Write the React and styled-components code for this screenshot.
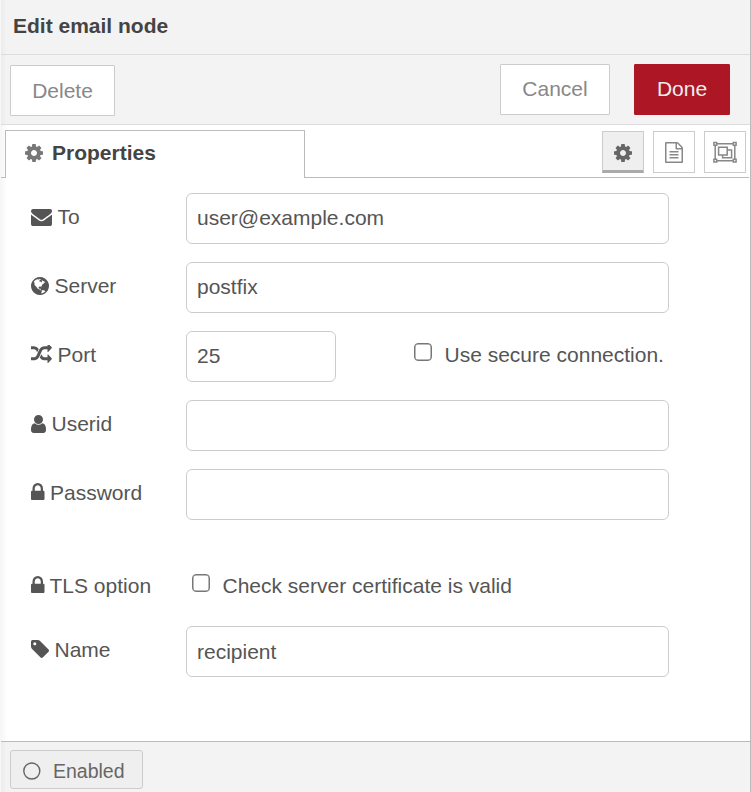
import React from "react";
import styled, { createGlobalStyle, css } from "styled-components";

const GlobalStyle = createGlobalStyle`
  *, *::before, *::after { box-sizing: border-box; }
  body {
    margin: 0;
    background: #fff;
    color: #555;
    font-family: "Liberation Sans", Arial, sans-serif;
    font-size: 21px;
    line-height: 30px;
    overflow: hidden;
  }
`;

const Tray = styled.div`
  display: flex;
  flex-direction: column;
  width: 751px;
  height: 792px;
  border-left: 1px solid #f7f7f7;
  border-right: 1px solid #bbb;
  background: linear-gradient(to right, #f6f6f6, #fff 6px);
`;

const Header = styled.header`
  height: 55px;
  padding: 11px 12px 0;
  background: linear-gradient(to right, #ececec, #f3f3f3 6px);
  border-bottom: 1px solid #ddd;
  color: #444;
  font-weight: bold;
`;

const Toolbar = styled.div`
  display: flex;
  align-items: flex-start;
  gap: 24px;
  height: 70px;
  padding: 9px 20px 0 9px;
  background: linear-gradient(to right, #ececec, #f3f3f3 6px);
  border-bottom: 1px solid #ddd;
`;

const Button = styled.button`
  width: ${(p) => p.$width}px;
  height: 51px;
  padding: 0 0 2px;
  border: 1px solid ${(p) => (p.$primary ? "#ad1625" : "#ccc")};
  border-radius: 1px;
  background: ${(p) => (p.$primary ? "#ad1625" : "#fff")};
  color: ${(p) => (p.$primary ? "#eee" : "#888")};
  font: inherit;
  ${(p) =>
    p.$first &&
    css`
      margin: 1px auto 0 0;
      padding: 0;
    `}
`;

const TabBar = styled.div`
  display: flex;
  height: 53px;
  padding-top: 5px;
`;

const TabEdge = styled.div`
  width: ${(p) => p.$width}px;
  border-bottom: 1px solid #bbb;
`;

const Tab = styled.div`
  display: flex;
  width: 300px;
  padding: 7px 0 0 19px;
  border: 1px solid #bbb;
  border-bottom: 0;
  background: #fff;
  color: #444;
  font-weight: bold;
  gap: 9px;
`;

const TabButtons = styled.div`
  display: flex;
  flex: 1;
  justify-content: flex-end;
  gap: 9px;
  padding: 1px 3px 0 0;
  border-bottom: 1px solid #bbb;
  margin-right: 1px;
`;

const IconButton = styled.button`
  display: flex;
  align-items: center;
  justify-content: center;
  width: 42px;
  height: 42px;
  padding: 0;
  border: 1px solid #ccc;
  background: #fff;
  color: #888;
  ${(p) =>
    p.$selected &&
    css`
      border-bottom: 3px solid #aaa;
      padding-top: 3px;
      background: #efefef;
      color: #666;
    `}
`;

const Form = styled.form`
  flex: 1;
  padding: 15px 0 0 29px;
`;

const Row = styled.div`
  display: flex;
  align-items: flex-start;
  height: ${(p) => p.$height || 69}px;
`;

const Label = styled.label`
  display: flex;
  width: 156px;
  padding: 9px 0 0 1px;
  gap: ${(p) => p.$gap || 5.5}px;
`;

const Glyph = styled.svg`
  display: block;
  flex: none;
  width: ${(p) => p.$w}px;
  height: ${(p) => p.$h || 21}px;
  margin-top: ${(p) => p.$top || 0}px;
  color: ${(p) => p.$color || "inherit"};
  fill: currentColor;
`;

const Input = styled.input`
  width: ${(p) => p.$width || 483}px;
  height: 51px;
  padding: 0 10px ${(p) => (p.$low ? 0 : 2)}px;
  border: 1px solid #ccc;
  border-radius: 6px;
  background: #fff;
  color: #555;
  font: inherit;
  outline: none;
`;

const Option = styled.label`
  display: flex;
  align-items: flex-start;
  gap: 12.5px;
  padding-top: 9px;
  margin-left: ${(p) => p.$indent}px;
`;

const Checkbox = styled.input.attrs({ type: "checkbox" })`
  appearance: none;
  width: 18px;
  height: 18px;
  margin: 3px 0 0;
  border: 1px solid #767676;
  box-shadow: inset 0 0 0 0.5px #767676;
  border-radius: 4px;
  background: #fff;
`;

const Footer = styled.footer`
  height: 51px;
  padding: 8px 9px 0;
  border-top: 1px solid #bbb;
  background: linear-gradient(to right, #ececec, #f3f3f3 6px);
`;

const Toggle = styled.button`
  display: flex;
  align-items: center;
  gap: 12px;
  width: 133px;
  height: 39px;
  padding: 2px 0 0 12px;
  border: 1px solid #ccc;
  border-radius: 3px;
  background: #efefef;
  color: #666;
  font: inherit;
  font-size: 19.5px;
`;

const PATHS = {
  cog: ["128 128 1536 1536", "M1152 896q0-106-75-181t-181-75-181 75-75 181 75 181 181 75 181-75 75-181zm512-109v222q0 12-8 23t-20 13l-185 28q-19 54-39 91 35 50 107 138 10 12 10 25t-9 23q-27 37-99 108t-94 71q-12 0-26-9l-138-108q-44 23-91 38-16 136-29 186-7 28-36 28h-222q-14 0-24.5-8.5t-11.5-21.5l-28-184q-49-16-90-37l-141 107q-10 9-25 9-14 0-25-11-126-114-165-168-7-10-7-23 0-12 8-23 15-21 51-66.5t54-70.5q-27-50-41-99l-183-27q-13-2-21-12.5t-8-23.5v-222q0-12 8-23t19-13l186-28q14-46 39-92-40-57-107-138-10-12-10-24 0-10 9-23 26-36 98.5-107.5t94.5-71.5q13 0 26 10l138 107q44-23 91-38 16-136 29-186 7-28 36-28h222q14 0 24.5 8.5t11.5 21.5l28 184q49 16 90 37l142-107q9-9 24-9 13 0 25 10 129 119 165 170 7 8 7 22 0 12-8 23-15 21-51 66.5t-54 70.5q26 50 41 98l183 28q13 2 21 12.5t8 23.5z"],
  envelope: ["0 256 1792 1408", "M1792 710v794q0 66-47 113t-113 47h-1472q-66 0-113-47t-47-113v-794q44 49 101 87 362 246 497 345 57 42 92.5 65.5t94.5 48 110 24.5h2q51 0 110-24.5t94.5-48 92.5-65.5q170-123 498-345 57-39 100-87zm0-294q0 79-49 151t-122 123q-376 261-468 325-10 7-42.5 31t-54 38.5-52 32.5-57.5 27-50 9h-2q-23 0-50-9t-57.5-27-52-32.5-54-38.5-42.5-31q-91-64-262-182.5t-205-142.5q-62-42-117-115.5t-55-136.5q0-78 41.5-130t118.5-52h1472q65 0 112.5 47t47.5 113z"],
  globe: ["128 128 1536 1536", "M896 128q209 0 385.5 103t279.5 279.5 103 385.5-103 385.5-279.5 279.5-385.5 103-385.5-103-279.5-279.5-103-385.5 103-385.5 279.5-279.5 385.5-103zm274 521q-2 1-9.5 9.5t-13.5 9.5q2 0 4.5-5t5-11 3.5-7q6-7 22-15 14-6 52-12 34-8 51 11-2-2 9.5-13t14.5-12q3-2 15-4.5t15-7.5l2-22q-12 1-17.5-7t-6.5-21q0 2-6 8 0-7-4.5-8t-11.5 1-9 1q-10-3-15-7.5t-8-16.5-4-15q-2-5-9.5-11t-9.5-10q-1-2-2.5-5.5t-3-6.5-4-5.5-5.5-2.5-7 5-7.5 10-4.5 5q-3-2-6-1.5t-4.5 1-4.5 3-5 3.5q-3 2-8.5 3t-8.5 2q15-5-1-11-10-4-16-3 9-4 7.5-12t-8.5-14h5q-1-4-8.5-8.5t-17.5-8.5-13-6q-8-5-34-9.5t-33-.5q-5 6-4.5 10.5t4 14 3.5 12.5q1 6-5.5 13t-6.5 12q0 7 14 15.5t10 21.5q-3 8-16 16t-16 12q-5 8-1.5 18.5t10.5 16.5q2 2 1.5 4t-3.5 4.5-5.5 4-6.5 3.5l-3 2q-11 5-20.5-6t-13.5-26q-7-25-16-30-23-8-29 1-5-13-41-26-25-9-58-4 6-1 0-15-7-15-19-12 3-6 4-17.5t1-13.5q3-13 12-23 1-1 7-8.5t9.5-13.5.5-6q35 4 50-11 5-5 11.5-17t10.5-17q9-6 14-5.5t14.5 5.5 14.5 5q14 1 15.5-11t-7.5-20q12 1 3-17-4-7-8-9-12-4-27 5-8 4 2 8-1-1-9.5 10.5t-16.5 17.5-16-5q-1-1-5.5-13.5t-9.5-13.5q-8 0-16 15 3-8-11-15t-24-8q19-12-8-27-7-4-20.5-5t-19.5 4q-5 7-5.5 11.5t5 8 10.5 5.5 11.5 4 8.5 3q14 10 8 14-2 1-8.5 3.5t-11.5 4.5-6 4q-3 4 0 14t-2 14q-5-5-9-17.5t-7-16.5q7 9-25 6l-10-1q-4 0-16 2t-20.5 1-13.5-8q-4-8 0-20 1-4 4-2-4-3-11-9.5t-10-8.5q-46 15-94 41 6 1 12-1 5-2 13-6.5t10-5.5q34-14 42-7l5-5q14 16 20 25-7-4-30-1-20 6-22 12 7 12 5 18-4-3-11.5-10t-14.5-11-15-5q-16 0-22 1-146 80-235 222 7 7 12 8 4 1 5 9t2.5 11 11.5-3q9 8 3 19 1-1 44 27 19 17 21 21 3 11-10 18-1-2-9-9t-9-4q-3 5 .5 18.5t10.5 12.5q-7 0-9.5 16t-2.5 35.5-1 23.5l2 1q-3 12 5.5 34.5t21.5 19.5q-13 3 20 43 6 8 8 9 3 2 12 7.5t15 10 10 10.5q4 5 10 22.5t14 23.5q-2 6 9.5 20t10.5 23q-1 0-2.5 1t-2.5 1q3 7 15.5 14t15.5 13q1 3 2 10t3 11 8 2q2-20-24-62-15-25-17-29-3-5-5.5-15.5t-4.5-14.5q2 0 6 1.5t8.5 3.5 7.5 4 2 3q-3 7 2 17.5t12 18.5 17 19 12 13q6 6 14 19.5t0 13.5q9 0 20 10.5t17 19.5q5 8 8 26t5 24q2 7 8.5 13.5t12.5 9.5l16 8 13 7q5 2 18.5 10.5t21.5 11.5q10 4 16 4t14.5-2.5 13.5-3.5q15-2 29 15t21 21q36 19 55 11-2 1 .5 7.5t8 15.5 9 14.5 5.5 8.5q5 6 18 15t18 15q6-4 7-9-3 8 7 20t18 10q14-3 14-32-31 15-49-18 0-1-2.5-5.5t-4-8.5-2.5-8.5 0-7.5 5-3q9 0 10-3.5t-2-12.5-4-13q-1-8-11-20t-12-15q-5 9-16 8t-16-9q0 1-1.5 5.5t-1.5 6.5q-13 0-15-1 1-3 2.5-17.5t3.5-22.5q1-4 5.5-12t7.5-14.5 4-12.5-4.5-9.5-17.5-2.5q-19 1-26 20-1 3-3 10.5t-5 11.5-9 7q-7 3-24 2t-24-5q-13-8-22.5-29t-9.5-37q0-10 2.5-26.5t3-25-5.5-24.5q3-2 9-9.5t10-10.5q2-1 4.5-1.5t4.5 0 4-1.5 3-6q-1-1-4-3-3-3-4-3 7 3 28.5-1.5t27.5 1.5q15 11 22-2 0-1-2.5-9.5t-.5-13.5q5 27 29 9 3 3 15.5 5t17.5 5q3 2 7 5.5t5.5 4.5 5-.5 8.5-6.5q10 14 12 24 11 40 19 44 7 3 11 2t4.5-9.5 0-14-1.5-12.5l-1-8v-18l-1-8q-15-3-18.5-12t1.5-18.5 15-18.5q1-1 8-3.5t15.5-6.5 12.5-8q21-19 15-35 7 0 11-9-1 0-5-3t-7.5-5-4.5-2q9-5 2-16 5-3 7.5-11t7.5-10q9 12 21 2 7-8 1-16 5-7 20.5-10.5t18.5-9.5q7 2 8-2t1-12 3-12q4-5 15-9t13-5l17-11q3-4 0-4 18 2 31-11 10-11-6-20 3-6-3-9.5t-15-5.5q3-1 11.5-.5t10.5-1.5q15-10-7-16-17-5-43 12zm-163 877q206-36 351-189-3-3-12.5-4.5t-12.5-3.5q-18-7-24-8 1-7-2.5-13t-8-9-12.5-8-11-7q-2-2-7-6t-7-5.5-7.5-4.5-8.5-2-10 1l-3 1q-3 1-5.5 2.5t-5.5 3-4 3 0 2.5q-21-17-36-22-5-1-11-5.5t-10.5-7-10-1.5-11.5 7q-5 5-6 15t-2 13q-7-5 0-17.5t2-18.5q-3-6-10.5-4.5t-12 4.5-11.5 8.5-9 6.5-8.5 5.5-8.5 7.5q-3 4-6 12t-5 11q-2-4-11.5-6.5t-9.5-5.5q2 10 4 35t5 38q7 31-12 48-27 25-29 40-4 22 12 26 0 7-8 20.5t-7 21.5q0 6 2 16z"],
  random: ["0 160 1792 1472", "M666 481q-60 92-137 273-22-45-37-72.5t-40.5-63.5-51-56.5-63-35-81.5-14.5h-224q-14 0-23-9t-9-23v-192q0-14 9-23t23-9h224q250 0 410 225zm1126 799q0 14-9 23l-320 320q-9 9-23 9-13 0-22.5-9.5t-9.5-22.5v-192q-32 0-85 .5t-81 1-73-1-71-5-64-10.5-63-18.5-58-28.5-59-40-55-53.5-56-69.5q59-93 136-273 22 45 37 72.5t40.5 63.5 51 56.5 63 35 81.5 14.5h256v-192q0-14 9-23t23-9q12 0 24 10l319 319q9 9 9 23zm0-896q0 14-9 23l-320 320q-9 9-23 9-13 0-22.5-9.5t-9.5-22.5v-192h-256q-48 0-87 15t-69 45-51 61.5-45 77.5q-32 62-78 171-29 66-49.5 111t-54 105-64 100-74 83-90 68.5-106.5 42-128 16.5h-224q-14 0-23-9t-9-23v-192q0-14 9-23t23-9h224q48 0 87-15t69-45 51-61.5 45-77.5q32-62 78-171 29-66 49.5-111t54-105 64-100 74-83 90-68.5 106.5-42 128-16.5h256v-192q0-14 9-23t23-9q12 0 24 10l319 319q9 9 9 23z"],
  user: ["256 128 1280 1536", "M1536 1399q0 109-62.5 187t-150.5 78h-854q-88 0-150.5-78t-62.5-187q0-85 8.5-160.5t31.5-152 58.5-131 94-89 134.5-34.5q131 128 313 128t313-128q76 0 134.5 34.5t94 89 58.5 131 31.5 152 8.5 160.5zm-256-887q0 159-112.5 271.5t-271.5 112.5-271.5-112.5-112.5-271.5 112.5-271.5 271.5-112.5 271.5 112.5 112.5 271.5z"],
  lock: ["320 128 1152 1408", "M640 768h512v-192q0-106-75-181t-181-75-181 75-75 181v192zm832 96v576q0 40-28 68t-68 28h-960q-40 0-68-28t-28-68v-576q0-40 28-68t68-28h32v-192q0-184 132-316t316-132 316 132 132 316v192h32q40 0 68 28t28 68z"],
  tag: ["128 128 1515 1515", "M576 448q0-53-37.5-90.5t-90.5-37.5-90.5 37.5-37.5 90.5 37.5 90.5 90.5 37.5 90.5-37.5 37.5-90.5zm1067 576q0 53-37 90l-491 492q-39 37-91 37-53 0-90-37l-715-716q-38-37-64.5-101t-26.5-117v-416q0-52 38-90t90-38h416q53 0 117 26.5t102 64.5l715 714q37 39 37 91z"],
  file: ["128 0 1536 1792", "M1596 380q28 28 48 76t20 88v1152q0 40-28 68t-68 28h-1344q-40 0-68-28t-28-68v-1600q0-40 28-68t68-28h896q40 0 88 20t76 48zm-444-244v376h376q-10-29-22-41l-313-313q-12-12-41-22zm384 1528v-1024h-416q-40 0-68-28t-28-68v-416h-768v1536h1280zm-1024-864q0-14 9-23t23-9h704q14 0 23 9t9 23v64q0 14-9 23t-23 9h-704q-14 0-23-9t-9-23v-64zm736 224q14 0 23 9t9 23v64q0 14-9 23t-23 9h-704q-14 0-23-9t-9-23v-64q0-14 9-23t23-9h704zm0 256q14 0 23 9t9 23v64q0 14-9 23t-23 9h-704q-14 0-23-9t-9-23v-64q0-14 9-23t23-9h704z"],
};

const Icon = ({ name, w, h, top, color }) => (
  <Glyph viewBox={PATHS[name][0]} preserveAspectRatio="none" $w={w} $h={h} $top={top} $color={color} aria-hidden="true">
    <path d={PATHS[name][1]} />
  </Glyph>
);

const GroupIcon = () => (
  <Glyph viewBox="0 0 24 22" $w={24} $h={22} aria-hidden="true">
    <g fill="none" stroke="currentColor" strokeWidth="1.5">
      <path d="M4 2.7H20M4 19.7H20M2.2 4.5V18M21.8 4.5V18" />
      <path d="M.9 1.4h2.8v2.8H.9zM20.3 1.4h2.8v2.8h-2.8zM.9 18.3h2.8v2.8H.9zM20.3 18.3h2.8v2.8h-2.8z" />
      <path d="M5.6 6.2h8.6v7.8h-8.6zM14.2 9h4.4v7.8h-9v-2.8" />
    </g>
  </Glyph>
);

const CircleIcon = () => (
  <Glyph viewBox="0 0 18 18" $w={18} $h={18} aria-hidden="true">
    <circle cx="8.8" cy="9" r="8" fill="none" stroke="currentColor" strokeWidth="1.4" />
  </Glyph>
);

export default function App() {
  return (
    <>
      <GlobalStyle />
      <Tray>
        <Header>Edit email node</Header>
        <Toolbar>
          <Button $width={105} $first>Delete</Button>
          <Button $width={110}>Cancel</Button>
          <Button $width={96} $primary>Done</Button>
        </Toolbar>
        <TabBar>
          <TabEdge $width={4} />
          <Tab>
            <Icon name="cog" w={18} h={18} top={5.5} color="#777" />
            Properties
          </Tab>
          <TabButtons>
            <IconButton $selected aria-label="Properties">
              <Icon name="cog" w={18} h={18} />
            </IconButton>
            <IconButton aria-label="Description">
              <Icon name="file" w={18} h={21} />
            </IconButton>
            <IconButton aria-label="Appearance">
              <GroupIcon />
            </IconButton>
          </TabButtons>
        </TabBar>
        <Form>
          <Row>
            <Label htmlFor="to"><Icon name="envelope" w={21} h={17} top={7} />To</Label>
            <Input id="to" defaultValue="user@example.com" />
          </Row>
          <Row>
            <Label htmlFor="server"><Icon name="globe" w={18} h={18} top={5.5} />Server</Label>
            <Input id="server" defaultValue="postfix" />
          </Row>
          <Row>
            <Label htmlFor="port"><Icon name="random" w={21} h={18} top={5} />Port</Label>
            <Input id="port" $width={150} defaultValue="25" />
            <Option $indent={78}><Checkbox />Use secure connection.</Option>
          </Row>
          <Row>
            <Label htmlFor="userid"><Icon name="user" w={15} h={18} top={5.5} />Userid</Label>
            <Input id="userid" />
          </Row>
          <Row $height={93}>
            <Label htmlFor="password"><Icon name="lock" w={13.5} h={17} top={5} />Password</Label>
            <Input id="password" type="password" />
          </Row>
          <Row $height={64}>
            <Label as="div" $gap={5}><Icon name="lock" w={13.5} h={17} top={5} />TLS option</Label>
            <Option $indent={6}><Checkbox />Check server certificate is valid</Option>
          </Row>
          <Row>
            <Label htmlFor="name"><Icon name="tag" w={18} h={18} top={5} />Name</Label>
            <Input id="name" $low defaultValue="recipient" />
          </Row>
        </Form>
        <Footer>
          <Toggle><CircleIcon />Enabled</Toggle>
        </Footer>
      </Tray>
    </>
  );
}
